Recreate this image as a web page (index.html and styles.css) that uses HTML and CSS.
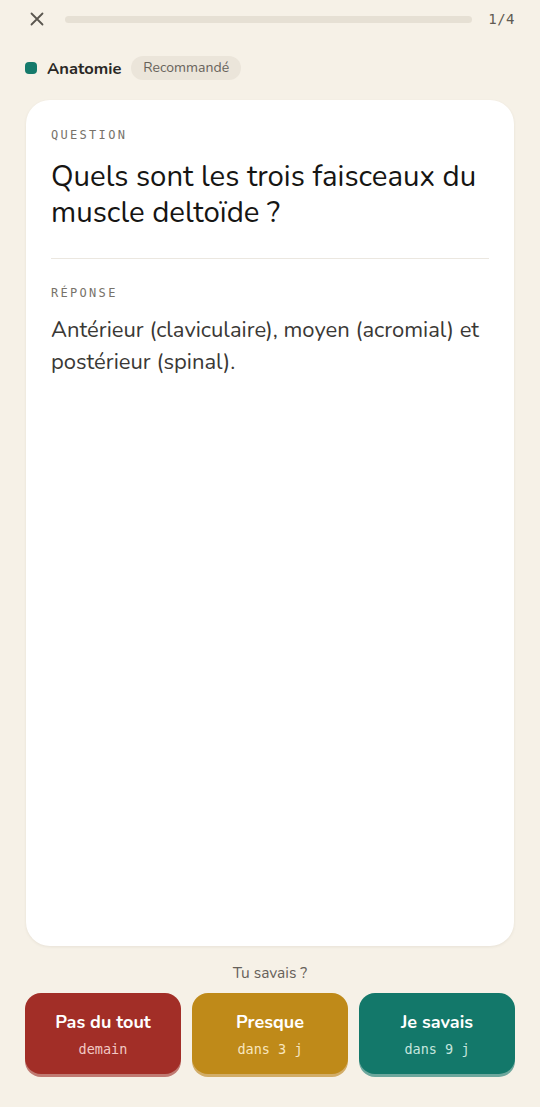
FILE: index.html
```html
<!DOCTYPE html>
<html lang="fr">
<head>
<meta charset="utf-8">
<title>Révision</title>
<link rel="stylesheet" href="styles.css">
</head>
<body>
<div class="app">
  <header class="topbar">
    <button class="close" aria-label="Fermer">
      <svg width="16" height="16" viewBox="0 0 16 16"><path d="M2.5 2.5 L13.5 13.5 M13.5 2.5 L2.5 13.5" stroke="#5a564f" stroke-width="1.8" stroke-linecap="round" fill="none"/></svg>
    </button>
    <div class="progress"><div class="progress-fill" style="width:0%"></div></div>
    <span class="count">1/4</span>
  </header>
  <div class="tags">
    <span class="dot"></span>
    <span class="subject">Anatomie</span>
    <span class="pill">Recommandé</span>
  </div>
  <main class="card">
    <div class="label">QUESTION</div>
    <h1 class="question">Quels sont les trois faisceaux du muscle deltoïde ?</h1>
    <hr class="divider">
    <div class="label">RÉPONSE</div>
    <p class="answer">Antérieur (claviculaire), moyen (acromial) et postérieur (spinal).</p>
  </main>
  <div class="prompt">Tu savais ?</div>
  <div class="choices">
    <button class="choice red"><span class="c-title">Pas du tout</span><span class="c-sub">demain</span></button>
    <button class="choice gold"><span class="c-title">Presque</span><span class="c-sub">dans 3 j</span></button>
    <button class="choice teal"><span class="c-title">Je savais</span><span class="c-sub">dans 9 j</span></button>
  </div>
</div>
</body>
</html>
```
FILE: styles.css
```css
* { box-sizing: border-box; }
html, body { margin: 0; padding: 0; }
body {
  background: #f6f1e7;
  font-family: "Nunito", "Lato", "Noto Sans", sans-serif;
  color: #1c1b19;
}
.app {
  height: 1107px;
  display: flex;
  flex-direction: column;
  padding: 0 25px 33px 25px;
}
.topbar {
  height: 38px;
  display: flex;
  align-items: center;
  gap: 16px;
}
.close {
  border: 0;
  background: none;
  padding: 0;
  width: 24px;
  display: flex;
  align-items: center;
  justify-content: center;
}
.progress {
  flex: 1;
  height: 7px;
  border-radius: 4px;
  background: #e6e0d4;
  overflow: hidden;
}
.progress-fill { height: 100%; background: #157a6b; }
.count {
  font-family: "DejaVu Sans Mono", monospace;
  font-size: 14px;
  color: #5f5a52;
  letter-spacing: 0.5px;
}
.tags {
  height: 62px;
  display: flex;
  align-items: center;
  padding-bottom: 2px;
}
.dot {
  width: 12px;
  height: 12px;
  border-radius: 4px;
  background: #157a6b;
  margin-right: 10px;
}
.subject {
  font-weight: 700;
  font-size: 16.5px;
  color: #2a2825;
  margin-right: 10px;
}
.pill {
  background: #ebe5da;
  color: #67625a;
  font-size: 14px;
  padding: 4px 12px;
  border-radius: 12px;
  line-height: 16px;
}
.card {
  flex: 1;
  background: #ffffff;
  border-radius: 24px;
  margin: 0 1px;
  padding: 27px 25px;
  box-shadow: 0 1px 3px rgba(60, 50, 30, 0.08);
}
.label {
  font-family: "DejaVu Sans Mono", monospace;
  font-size: 12px;
  line-height: 16px;
  letter-spacing: 2.3px;
  color: #77726a;
}
.question {
  margin: 15px 0 0 0;
  font-size: 29.4px;
  line-height: 36px;
  font-weight: 400;
  color: #161513;
}
.divider {
  border: 0;
  border-top: 1px solid #ebe7e0;
  margin: 28px 0 26px 0;
}
.answer {
  margin: 13px 0 0 0;
  font-size: 22px;
  line-height: 32px;
  color: #3a3835;
}
.prompt {
  text-align: center;
  font-size: 15.5px;
  line-height: 20px;
  color: #66615a;
  margin-top: 17px;
  margin-bottom: 10px;
}
.choices {
  display: grid;
  grid-template-columns: 1fr 1fr 1fr;
  gap: 11px;
}
.choice {
  height: 81px;
  border: 0;
  border-radius: 16px;
  display: flex;
  flex-direction: column;
  align-items: center;
  justify-content: center;
  gap: 8px;
  color: #fff;
  font-family: inherit;
  padding: 0;
}
.c-title { font-size: 18px; font-weight: 700; line-height: 22px; }
.c-sub { font-family: "DejaVu Sans Mono", monospace; font-size: 13.5px; line-height: 16px; }
.red { background: #a22e27; box-shadow: 0 3px 0 #c07a72; }
.red .c-sub { color: #f1c9c3; }
.gold { background: #bf8a19; box-shadow: 0 3px 0 #d2ad68; }
.gold .c-sub { color: #f8e6bf; }
.teal { background: #13786a; box-shadow: 0 3px 0 #6da79d; }
.teal .c-sub { color: #c6e6de; }
```
